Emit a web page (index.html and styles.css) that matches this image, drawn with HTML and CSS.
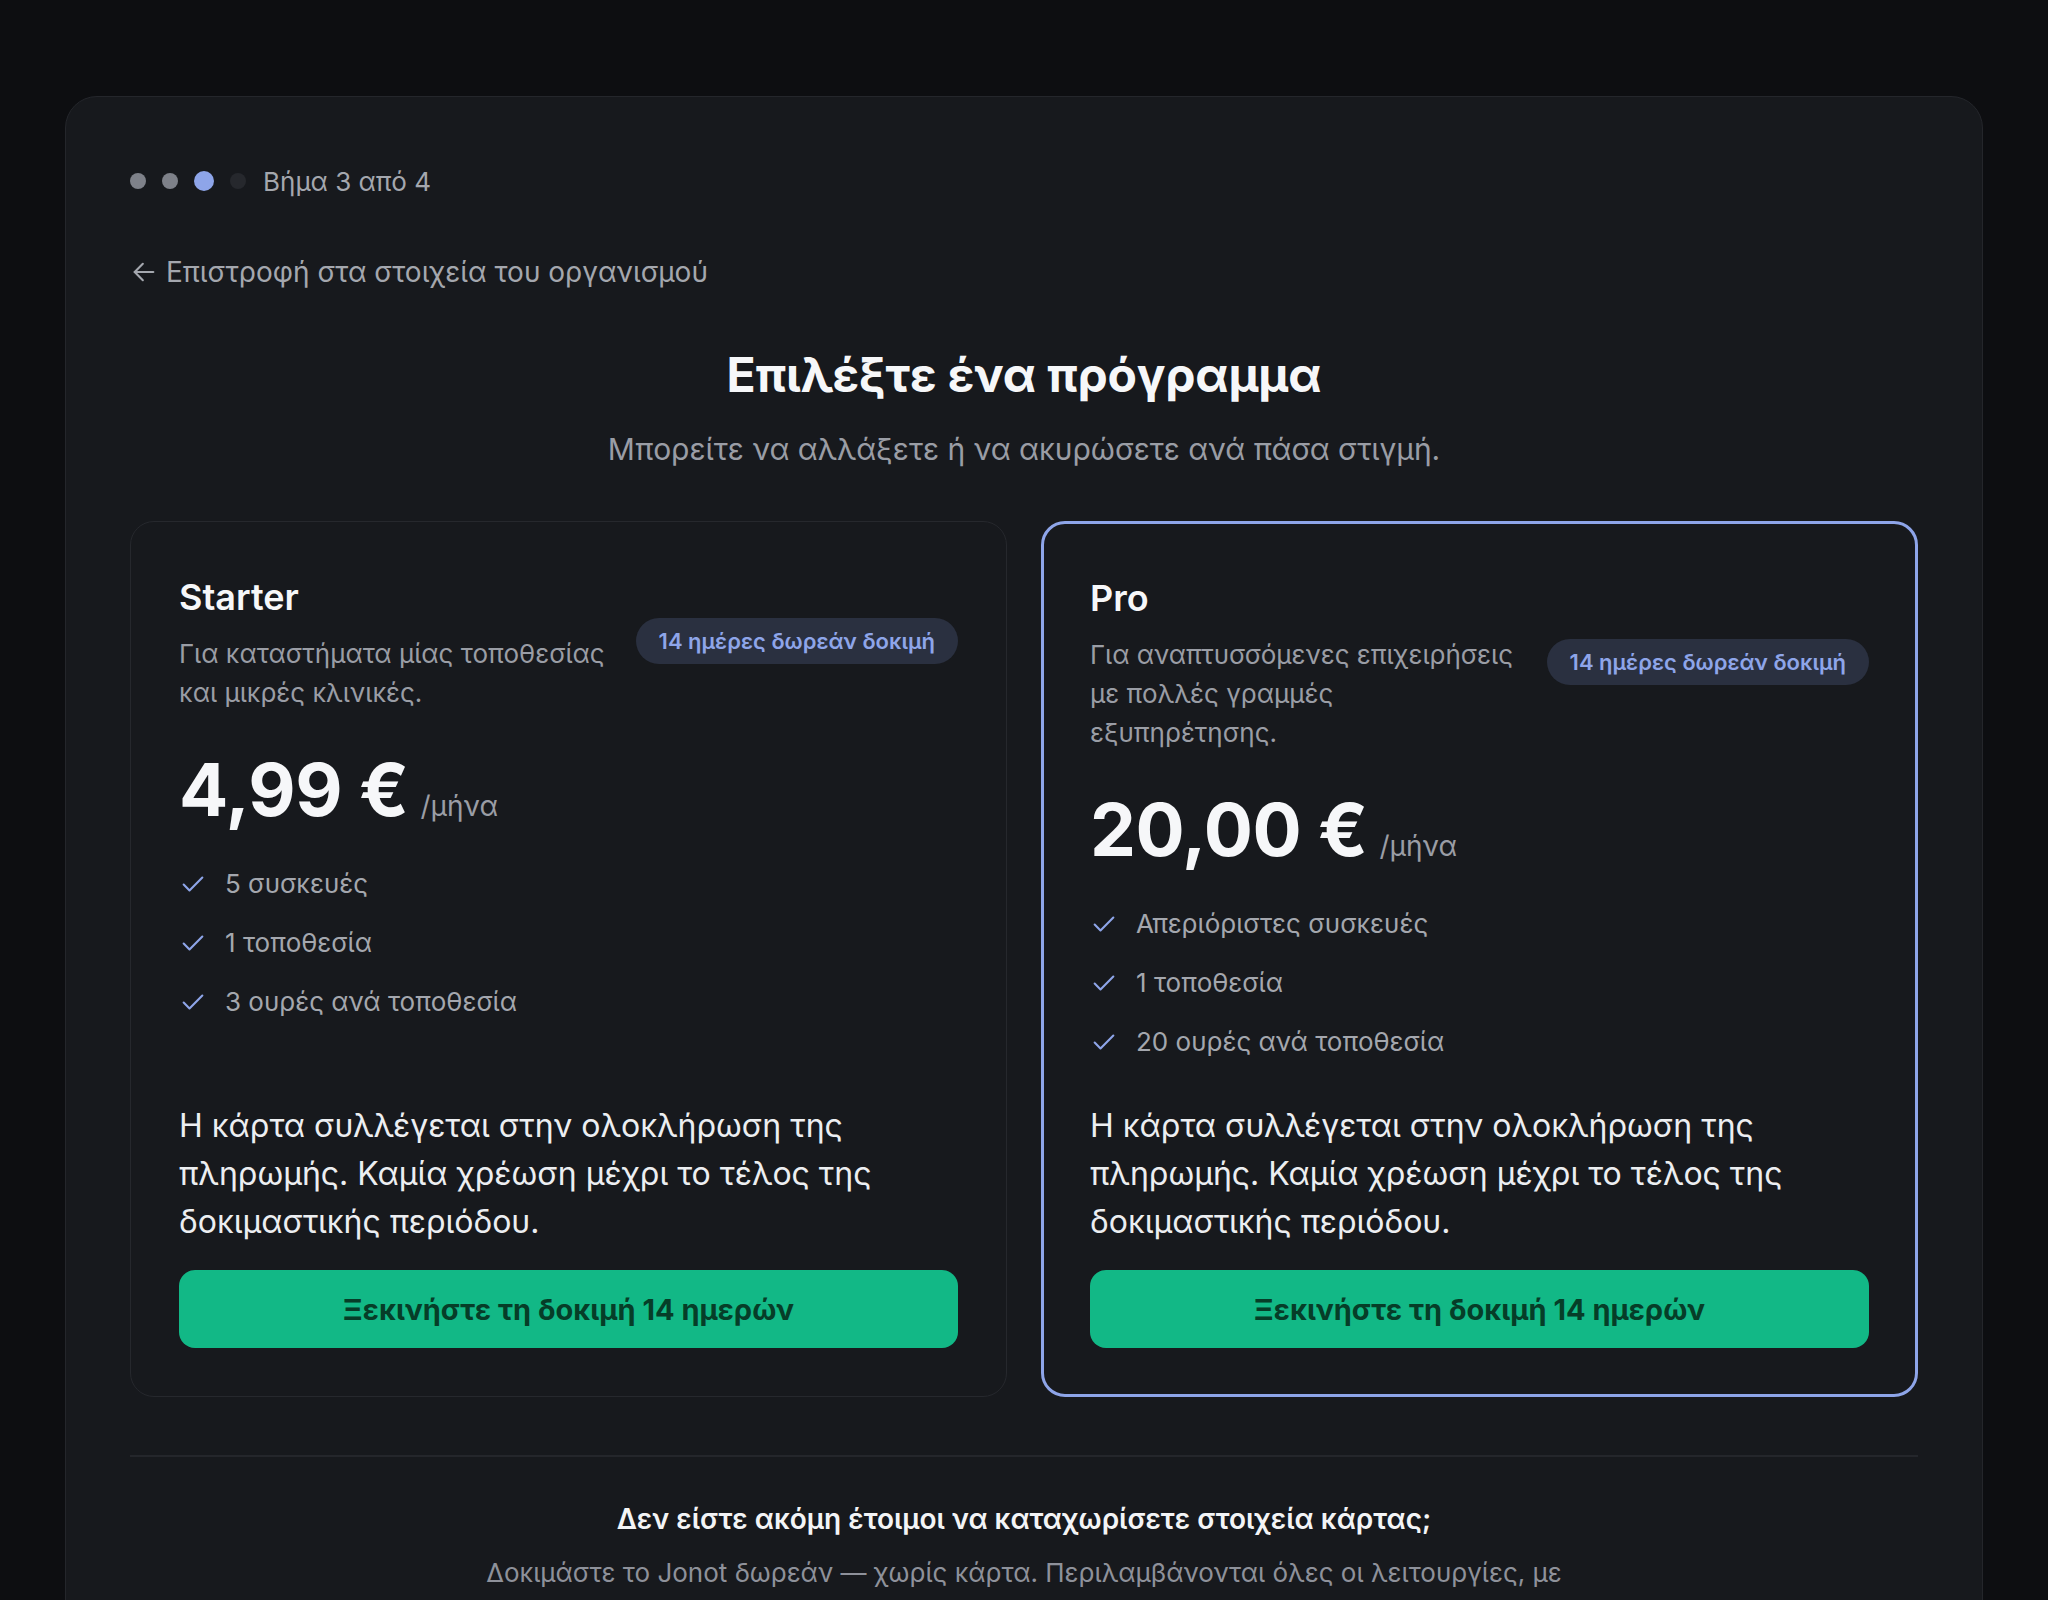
FILE: index.html
```html
<!DOCTYPE html>
<html lang="el">
<head>
<meta charset="utf-8">
<title>Επιλέξτε ένα πρόγραμμα</title>
<link rel="stylesheet" href="styles.css">
</head>
<body>
<main class="shell">
  <div class="steps">
    <span class="dot done"></span>
    <span class="dot done"></span>
    <span class="dot current"></span>
    <span class="dot todo"></span>
    <span class="steps-label">Βήμα 3 από 4</span>
  </div>

  <a class="back" href="#">
    <svg class="back-icon" viewBox="0 0 24 24" fill="none" stroke="currentColor" stroke-width="1.8" stroke-linecap="round" stroke-linejoin="round"><path d="M20 12H4"/><path d="M11 19l-7-7 7-7"/></svg>
    <span>Επιστροφή στα στοιχεία του οργανισμού</span>
  </a>

  <h1 class="title">Επιλέξτε ένα πρόγραμμα</h1>
  <p class="subtitle">Μπορείτε να αλλάξετε ή να ακυρώσετε ανά πάσα στιγμή.</p>

  <section class="plans">
    <article class="plan">
      <div class="plan-head">
        <div class="plan-info">
          <h2 class="plan-name">Starter</h2>
          <p class="plan-desc">Για καταστήματα μίας τοποθεσίας και μικρές κλινικές.</p>
        </div>
        <span class="badge">14 ημέρες δωρεάν δοκιμή</span>
      </div>
      <div class="price"><span class="amount">4,99 €</span><span class="unit">/μήνα</span></div>
      <ul class="features">
        <li><svg class="check" viewBox="0 0 24 24" fill="none" stroke="currentColor" stroke-width="1.8" stroke-linecap="round" stroke-linejoin="round"><path d="M4 12.5l5 5L20 6.5"/></svg>5 συσκευές</li>
        <li><svg class="check" viewBox="0 0 24 24" fill="none" stroke="currentColor" stroke-width="1.8" stroke-linecap="round" stroke-linejoin="round"><path d="M4 12.5l5 5L20 6.5"/></svg>1 τοποθεσία</li>
        <li><svg class="check" viewBox="0 0 24 24" fill="none" stroke="currentColor" stroke-width="1.8" stroke-linecap="round" stroke-linejoin="round"><path d="M4 12.5l5 5L20 6.5"/></svg>3 ουρές ανά τοποθεσία</li>
      </ul>
      <p class="note">Η κάρτα συλλέγεται στην ολοκλήρωση της πληρωμής. Καμία χρέωση μέχρι το τέλος της δοκιμαστικής περιόδου.</p>
      <button class="cta" type="button">Ξεκινήστε τη δοκιμή 14 ημερών</button>
    </article>

    <article class="plan selected">
      <div class="plan-head">
        <div class="plan-info">
          <h2 class="plan-name">Pro</h2>
          <p class="plan-desc">Για αναπτυσσόμενες επιχειρήσεις με πολλές γραμμές εξυπηρέτησης.</p>
        </div>
        <span class="badge">14 ημέρες δωρεάν δοκιμή</span>
      </div>
      <div class="price"><span class="amount">20,00 €</span><span class="unit">/μήνα</span></div>
      <ul class="features">
        <li><svg class="check" viewBox="0 0 24 24" fill="none" stroke="currentColor" stroke-width="1.8" stroke-linecap="round" stroke-linejoin="round"><path d="M4 12.5l5 5L20 6.5"/></svg>Απεριόριστες συσκευές</li>
        <li><svg class="check" viewBox="0 0 24 24" fill="none" stroke="currentColor" stroke-width="1.8" stroke-linecap="round" stroke-linejoin="round"><path d="M4 12.5l5 5L20 6.5"/></svg>1 τοποθεσία</li>
        <li><svg class="check" viewBox="0 0 24 24" fill="none" stroke="currentColor" stroke-width="1.8" stroke-linecap="round" stroke-linejoin="round"><path d="M4 12.5l5 5L20 6.5"/></svg>20 ουρές ανά τοποθεσία</li>
      </ul>
      <p class="note">Η κάρτα συλλέγεται στην ολοκλήρωση της πληρωμής. Καμία χρέωση μέχρι το τέλος της δοκιμαστικής περιόδου.</p>
      <button class="cta" type="button">Ξεκινήστε τη δοκιμή 14 ημερών</button>
    </article>
  </section>

  <hr class="divider">

  <section class="free">
    <h3 class="free-title">Δεν είστε ακόμη έτοιμοι να καταχωρίσετε στοιχεία κάρτας;</h3>
    <p class="free-text">Δοκιμάστε το Jonot δωρεάν — χωρίς κάρτα. Περιλαμβάνονται όλες οι λειτουργίες, με όριο χρήσης για μία τοποθεσία, χωρίς χρονικό περιορισμό.</p>
  </section>
</main>
</body>
</html>
```

FILE: styles.css
```css
* {
  box-sizing: border-box;
}

html, body {
  margin: 0;
  background: #0d0e11;
}

body {
  padding: 96px 65px 0;
  font-family: Inter, "Noto Sans", "DejaVu Sans", sans-serif;
  color: #f3f4f6;
}

.shell {
  background: #17191d;
  border: 1px solid #24262b;
  border-radius: 32px;
  padding: 64px;
}

/* steps */
.steps {
  display: flex;
  align-items: center;
  gap: 16px;
  height: 40px;
}

.dot {
  width: 16px;
  height: 16px;
  border-radius: 50%;
  flex: none;
}

.dot.done {
  background: #7e8189;
}

.dot.current {
  width: 20px;
  height: 20px;
  background: #8ea5e9;
}

.dot.todo {
  background: #26282d;
}

.steps-label {
  margin-left: 1px;
  font-size: 26px;
  color: #a4a7ae;
}

/* back link */
.back {
  display: inline-flex;
  align-items: center;
  gap: 8px;
  margin-top: 51px;
  height: 40px;
  font-size: 28px;
  color: #a4a7ae;
  text-decoration: none;
}

.back-icon {
  width: 28px;
  height: 28px;
  flex: none;
}

/* heading */
.title {
  margin: 55px 0 0;
  text-align: center;
  font-size: 48px;
  line-height: 56px;
  font-weight: 700;
  letter-spacing: -0.2px;
  color: #f6f7f9;
}

.subtitle {
  margin: 26px 0 0;
  text-align: center;
  font-size: 30px;
  line-height: 40px;
  color: #9a9da5;
}

/* plans */
.plans {
  display: grid;
  grid-template-columns: 1fr 1fr;
  gap: 34px;
  margin-top: 52px;
}

.plan {
  display: flex;
  flex-direction: column;
  border: 1px solid #26282d;
  border-radius: 24px;
  padding: 48px;
  background: #17191d;
}

.plan.selected {
  border: 3px solid #8ea5e9;
  padding: 47px 46px 46px;
}

.plan-head {
  display: flex;
  align-items: center;
  gap: 28px;
}

.plan-info {
  flex: 1;
  min-width: 0;
}

.plan-name {
  margin: 0;
  font-size: 36px;
  line-height: 54px;
  font-weight: 600;
  color: #f6f7f9;
}

.plan-desc {
  margin: 10px 0 0;
  font-size: 26px;
  line-height: 39px;
  color: #9a9da5;
}

.badge {
  flex: none;
  height: 46px;
  padding: 0 23px;
  display: inline-flex;
  align-items: center;
  border-radius: 23px;
  background: #2a3040;
  color: #8ea5e9;
  font-size: 22px;
  font-weight: 600;
}

.price {
  display: flex;
  align-items: baseline;
  gap: 12px;
  margin-top: 38px;
  line-height: 80px;
}

.amount {
  font-size: 73px;
  font-weight: 700;
  letter-spacing: -0.5px;
  color: #f6f7f9;
}

.unit {
  font-size: 28px;
  color: #9a9da5;
}

.features {
  list-style: none;
  margin: 20px 0 42px;
  padding: 0;
  display: flex;
  flex-direction: column;
  gap: 23px;
}

.features li {
  display: flex;
  align-items: center;
  gap: 18px;
  font-size: 26px;
  line-height: 36px;
  color: #a4a7ae;
}

.check {
  width: 28px;
  height: 28px;
  color: #8ea5e9;
  flex: none;
}

.note {
  margin: auto 0 0;
  font-size: 32px;
  line-height: 48px;
  color: #eceef1;
}

.cta {
  margin-top: 24px;
  height: 78px;
  width: 100%;
  border: 0;
  border-radius: 16px;
  background: #12b886;
  color: #063d28;
  font-family: inherit;
  font-size: 29px;
  font-weight: 700;
  cursor: pointer;
}

/* bottom */
.divider {
  margin: 58px 0 0;
  border: 0;
  height: 2px;
  background: #24262b;
}

.free {
  display: flex;
  flex-direction: column;
  align-items: center;
  text-align: center;
}

.free-title {
  margin: 42px 0 0;
  font-size: 28px;
  line-height: 40px;
  font-weight: 600;
  color: #f3f4f6;
}

.free-text {
  margin: 13px 0 0;
  max-width: 1100px;
  font-size: 26px;
  line-height: 42px;
  color: #8e919a;
}
```
